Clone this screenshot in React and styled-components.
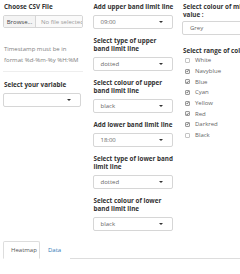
import React from "react";
import styled, { createGlobalStyle } from "styled-components";

const Global = createGlobalStyle`
  html, body { margin: 0; padding: 0; background: #fff; }
  body { font-family: "Open Sans", "Liberation Sans", sans-serif; color: #333; overflow: hidden; }
  * { box-sizing: border-box; }
`;

const Page = styled.div`
  width: 240px;
  height: 274px;
  overflow: hidden;
  padding: 3px 0 0 3px;
`;

const Grid = styled.div`
  display: grid;
  grid-template-columns: 80px 80px 80px;
  column-gap: 9.5px;
  align-items: start;
`;

const Col = styled.div`
  display: flex;
  flex-direction: column;
  min-width: 0;
`;

const Group = styled.div`
  display: flex;
  flex-direction: column;
  margin-bottom: ${(p) => p.$mb ?? 8}px;
`;

const Label = styled.div`
  font-size: 6.3px;
  font-weight: 700;
  line-height: 8px;
  color: #333;
  white-space: nowrap;
  margin-bottom: ${(p) => p.$mb ?? 4}px;
  padding-left: 1px;
`;

const SelectBox = styled.div`
  height: 14px;
  border: 1px solid #d6d6d6;
  border-radius: 2px;
  display: flex;
  align-items: center;
  justify-content: space-between;
  padding: 0 9px 0 7px;
  font-size: 6px;
  color: #666;
  background: #fff;
  width: ${(p) => p.$w || "100%"};
`;

const Caret = styled.span`
  width: 0;
  height: 0;
  border-left: 2px solid transparent;
  border-right: 2px solid transparent;
  border-top: 2px solid #333;
`;

const FileRow = styled.div`
  display: flex;
  height: 13px;
  border: 1px solid #d6d6d6;
  border-radius: 2px;
  overflow: hidden;
  font-size: 6px;
`;

const BrowseBtn = styled.div`
  width: 32px;
  background: #f4f4f4;
  border-right: 1px solid #d6d6d6;
  display: flex;
  align-items: center;
  justify-content: center;
  color: #444;
`;

const FileName = styled.div`
  flex: 1;
  display: flex;
  align-items: center;
  padding-left: 5px;
  color: #999;
  white-space: nowrap;
  overflow: hidden;
  background: #fafafa;
`;

const Help = styled.div`
  font-size: 6px;
  line-height: 11px;
  color: #808080;
  margin-top: 16px;
  padding-left: 1px;
`;

const Rule = styled.hr`
  border: 0;
  border-top: 1px solid #eee;
  margin: 5px 0 9px 0;
  width: 80px;
`;

const CheckList = styled.div`
  display: flex;
  flex-direction: column;
`;

const CheckRow = styled.div`
  display: flex;
  align-items: center;
  height: 10.7px;
  padding-left: 3px;
  font-size: 6px;
  color: #666;
  white-space: nowrap;
`;

const Box = styled.span`
  width: 5px;
  height: 5px;
  border: 1px solid ${(p) => (p.$on ? "#9a9a9a" : "#c4c4c4")};
  border-radius: 1px;
  background: ${(p) => (p.$on ? "#f2f2f2" : "#fff")};
  margin-right: 5px;
  display: flex;
  align-items: center;
  justify-content: center;
  flex: none;
`;

const Tabs = styled.div`
  display: flex;
  align-items: flex-end;
  margin-top: 10px;
  border-bottom: 1px solid #ddd;
  width: 237px;
  height: 18px;
`;

const Tab = styled.div`
  height: 18px;
  padding: 0 7px;
  display: flex;
  align-items: center;
  font-size: 6px;
  color: ${(p) => (p.$active ? "#555" : "#337ab7")};
  border: 1px solid ${(p) => (p.$active ? "#ddd" : "transparent")};
  border-bottom: 1px solid ${(p) => (p.$active ? "#fff" : "transparent")};
  border-radius: 2px 2px 0 0;
  margin-bottom: -1px;
  background: #fff;
  width: ${(p) => p.$w}px;
`;

const Check = () => (
  <svg width="4" height="4" viewBox="0 0 10 10">
    <path d="M1.5 5.2 L4 7.8 L8.6 2" fill="none" stroke="#333" strokeWidth="2" />
  </svg>
);

const Select = ({ value, w }) => (
  <SelectBox $w={w}>
    <span>{value}</span>
    <Caret />
  </SelectBox>
);

const colours = [
  ["White", false],
  ["Navyblue", true],
  ["Blue", true],
  ["Cyan", true],
  ["Yellow", true],
  ["Red", true],
  ["Darkred", true],
  ["Black", false],
];

export default function App() {
  return (
    <Page>
      <Global />
      <Grid>
        <Col>
          <Label>Choose CSV File</Label>
          <FileRow>
            <BrowseBtn>Browse...</BrowseBtn>
            <FileName>No file selected</FileName>
          </FileRow>
          <Help>
            Timestamp must be in
            <br />
            format %d-%m-%y %H:%M
          </Help>
          <Rule />
          <Group>
            <Label>Select your variable</Label>
            <Select value="" w="78px" />
          </Group>
        </Col>
        <Col>
          <Group>
            <Label>Add upper band limit line</Label>
            <Select value="09:00" />
          </Group>
          <Group>
            <Label>
              Select type of upper
              <br />
              band limit line
            </Label>
            <Select value="dotted" />
          </Group>
          <Group>
            <Label>
              Select colour of upper
              <br />
              band limit line
            </Label>
            <Select value="black" />
          </Group>
          <Group>
            <Label>Add lower band limit line</Label>
            <Select value="18:00" />
          </Group>
          <Group>
            <Label>
              Select type of lower band
              <br />
              limit line
            </Label>
            <Select value="dotted" />
          </Group>
          <Group $mb={0}>
            <Label>
              Select colour of lower
              <br />
              band limit line
            </Label>
            <Select value="black" />
          </Group>
        </Col>
        <Col>
          <Group $mb={12}>
            <Label $mb={2}>
              Select colour of missing
              <br />
              value :
            </Label>
            <SelectBox $w="90px">
              <span>Grey</span>
            </SelectBox>
          </Group>
          <Label $mb={0}>Select range of colours</Label>
          <CheckList>
            {colours.map(([name, on]) => (
              <CheckRow key={name}>
                <Box $on={on}>{on && <Check />}</Box>
                {name}
              </CheckRow>
            ))}
          </CheckList>
        </Col>
      </Grid>
      <Tabs>
        <Tab $active $w={37}>Heatmap</Tab>
        <Tab $w={30}>Data</Tab>
      </Tabs>
    </Page>
  );
}
